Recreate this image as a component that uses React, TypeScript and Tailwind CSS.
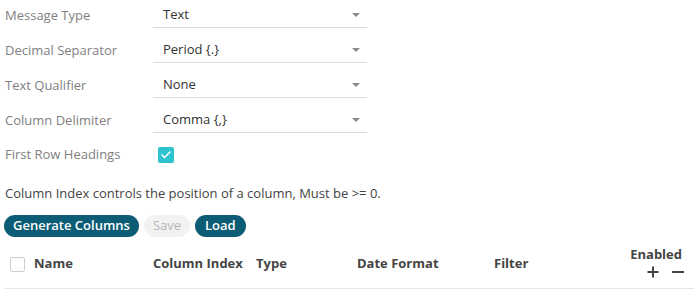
import { Check } from "lucide-react";

const fields = [
  { label: "Message Type", value: "Text" },
  { label: "Decimal Separator", value: "Period {.}" },
  { label: "Text Qualifier", value: "None" },
  { label: "Column Delimiter", value: "Comma {,}" },
];

function Select({ value }: { value: string }) {
  return (
    <div className="flex h-[28px] w-[214px] items-center justify-between border-b border-[#dcdcdc] pl-[10px] pr-[7px] pt-[3px] text-[13px] text-[#333]">
      <span>{value}</span>
      <span className="h-0 w-0 border-x-[4px] border-t-[4px] border-x-transparent border-t-[#8a8a8a]" />
    </div>
  );
}

export default function App() {
  return (
    <div className="h-[297px] w-[698px] bg-white font-['Open_Sans',sans-serif] text-[13px]">
      <div className="pl-[5px]">
        {fields.map((f) => (
          <div key={f.label} className="mb-[7px] flex h-[28px] items-center">
            <div className="w-[148px] pt-[4px] text-[#7f7f7f]">{f.label}</div>
            <Select value={f.value} />
          </div>
        ))}
        <div className="flex h-[28px] items-center pt-[2px]">
          <div className="w-[153px] text-[#7f7f7f]">First Row Headings</div>
          <div className="flex h-[16px] w-[16px] items-center justify-center rounded-[2px] bg-[#2ec4cf]">
            <Check className="h-[12px] w-[12px] text-white" strokeWidth={3} />
          </div>
        </div>
        <p className="mt-[16px] text-[#444]">
          Column Index controls the position of a column, Must be &gt;= 0.
        </p>
      </div>

      <div className="mt-[11px] flex gap-[5px] pl-[4px]">
        <button className="h-[22px] rounded-full bg-[#0b5c74] px-[9px] text-[13px] font-semibold text-white">
          Generate Columns
        </button>
        <button className="h-[22px] rounded-full bg-[#f2f2f2] px-[9px] text-[13px] text-[#b5b5b5]">
          Save
        </button>
        <button className="h-[22px] rounded-full bg-[#0b5c74] px-[10px] text-[13px] font-semibold text-white">
          Load
        </button>
      </div>

      <div className="mx-[4px] mt-[9px] flex h-[43px] items-center border-b border-[#e6e6e6] pb-[5px] pl-[6px] pr-[10px] font-bold text-[#444]">
        <div className="mr-[9px] h-[15px] w-[15px] rounded-[2px] border border-[#cfcfcf]" />
        <div className="w-[119px]">Name</div>
        <div className="w-[103px]">Column Index</div>
        <div className="w-[101px]">Type</div>
        <div className="w-[137px]">Date Format</div>
        <div className="flex-1">Filter</div>
        <div className="mb-[5px] flex flex-col items-end">
          <span className="pr-[2px] leading-[18px]">Enabled</span>
          <span className="mt-[3px] flex items-center gap-[13px]">
            <svg width="12" height="12" viewBox="0 0 12 12" aria-hidden="true">
              <path d="M6 0.5V11.5M0.5 6H11.5" stroke="#444" strokeWidth="2" />
            </svg>
            <svg width="12" height="12" viewBox="0 0 12 12" aria-hidden="true">
              <path d="M0 6H12" stroke="#444" strokeWidth="2" />
            </svg>
          </span>
        </div>
      </div>
    </div>
  );
}
